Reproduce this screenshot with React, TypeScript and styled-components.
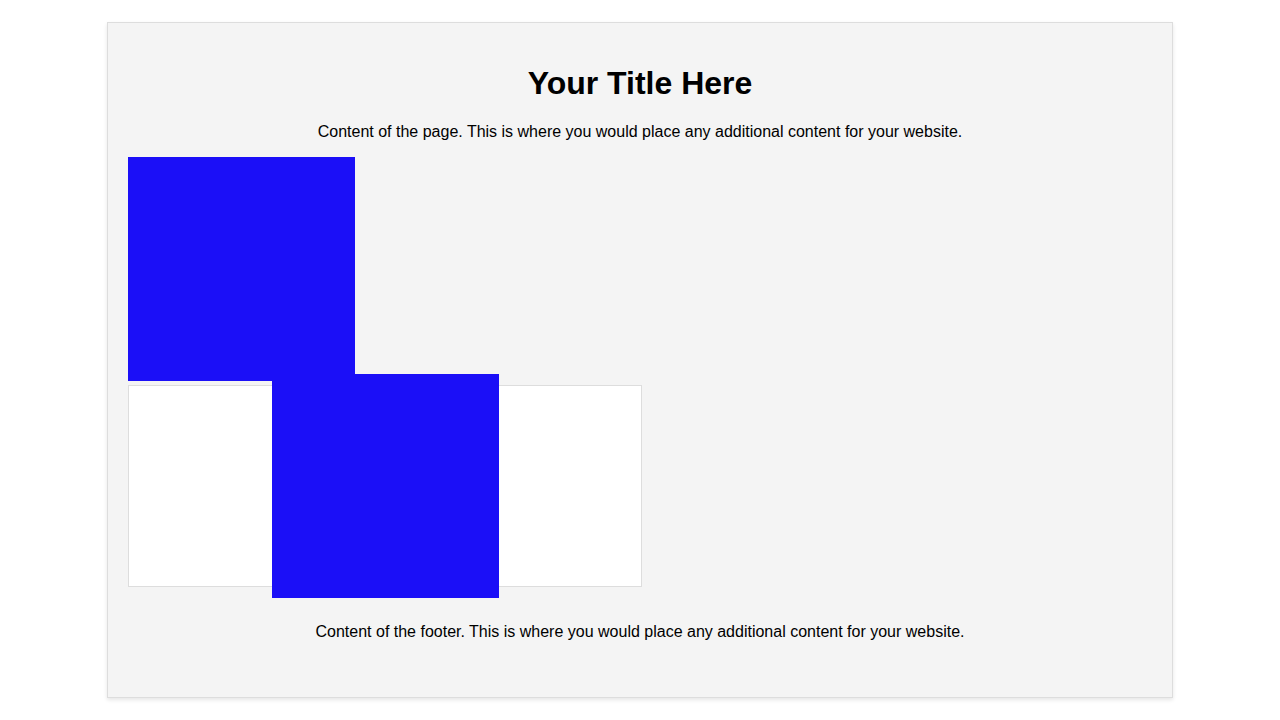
import React from 'react';
import styled, { createGlobalStyle } from 'styled-components';

const GlobalStyle = createGlobalStyle`
  * { box-sizing: border-box; }
  body {
    margin: 0;
    background: #fff;
    color: #000;
    font: 16px/18px "Liberation Sans", Arial, sans-serif;
  }
`;

const Page = styled.div`
  min-height: 100vh;
  display: flex;
  align-items: center;
  justify-content: center;
`;

const Card = styled.main`
  width: calc(80% + 42px);
  padding: 20px 20px 56px;
  background: #f4f4f4;
  border: 1px solid #ddd;
  box-shadow: 0 2px 4px rgba(0, 0, 0, 0.1);
`;

const Title = styled.h1`
  margin: 22px 0;
  font-size: 32px;
  line-height: 36px;
  text-align: center;
`;

const Text = styled.p`
  margin: 0;
  text-align: center;
`;

const Block = styled.div`
  width: 227px;
  height: 224px;
  flex: none;
  background: #1b0ff7;
`;

const Gallery = styled.section`
  display: flex;
  flex-direction: column;
  gap: 4px;
  margin: 16px 0 36px;
`;

const Frame = styled.div`
  box-sizing: content-box;
  width: 50%;
  height: 200px;
  display: flex;
  align-items: center;
  justify-content: center;
  background: #fff;
  border: 1px solid #ddd;
`;

export default function App() {
  return (
    <>
      <GlobalStyle />
      <Page>
        <Card>
          <Title>Your Title Here</Title>
          <Text>Content of the page. This is where you would place any additional content for your website.</Text>
          <Gallery>
            <Block />
            <Frame>
              <Block />
            </Frame>
          </Gallery>
          <footer>
            <Text>Content of the footer. This is where you would place any additional content for your website.</Text>
          </footer>
        </Card>
      </Page>
    </>
  );
}
